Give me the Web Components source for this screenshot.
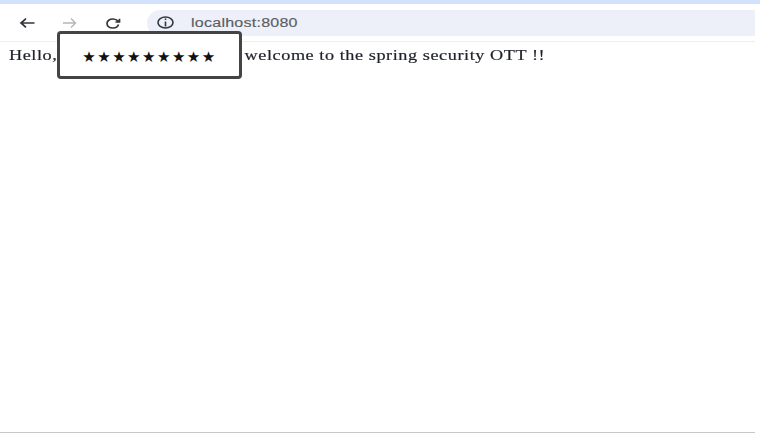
<!DOCTYPE html>
<html><head><meta charset="utf-8"><style>
html,body{margin:0;padding:0;background:#fff;width:760px;height:439px;overflow:hidden}
</style></head><body>
<browser-window>
<browser-toolbar url="localhost:8080"></browser-toolbar>
<page-content></page-content>
</browser-window>
<script>
class BrowserWindow extends HTMLElement{constructor(){super();this.attachShadow({mode:'open'}).innerHTML=`<style>
:host{display:flex;flex-direction:column;width:755px;height:432px;border-bottom:1px solid #c8c8c8;position:relative;box-sizing:content-box;filter:blur(.55px)}
.strip{height:4px;background:#d3e3fd;flex:none;margin-right:-5px}
</style><div class="strip"></div><slot></slot>`}}
class BrowserToolbar extends HTMLElement{constructor(){super();this.attachShadow({mode:'open'}).innerHTML=`<style>
:host{display:flex;align-items:center;height:38px;flex:none;border-bottom:1px solid #eceef2;box-sizing:border-box;padding:0 0 0 19px;background:#fff}
svg{display:block;flex:none}
.nav{display:flex;gap:28px;align-items:center;margin-right:26px;padding-top:1px}
.pill{flex:1;height:26px;background:#edf0f8;border-radius:13px 0 0 13px;display:flex;align-items:center;padding-left:10px;gap:17px}
.url{display:inline-block;font:12.500px "Liberation Sans",sans-serif;color:#5a5d65;letter-spacing:.2px;transform:scaleX(1.28);transform-origin:left center;-webkit-text-stroke:.15px #5a5d65}
</style>
<div class="nav">
<svg width="16" height="10" viewBox="0 0 16 10" fill="none" stroke="#33363a" stroke-width="1.700"><path d="M15.500 5H2M7 .6 2 5l5 4.400"/></svg>
<svg width="14" height="10" viewBox="0 0 14 10" fill="none" stroke="#b4b7bc" stroke-width="1.400"><path d="M0 5h12.500M8 .6 12.500 5 8 9.400"/></svg>
<svg width="16" height="11" viewBox="0 0 16 11" fill="none" stroke="#33363a" stroke-width="1.700"><path d="M13.500 6.500C12.800 8.900 10.800 10 8 10 4.500 10 2 8.200 2 5.500S4.500 1 8 1c2.400 0 4 .8 5.500 2.400M14.500 .8v3.200h-4"/></svg>
</div>
<div class="pill">
<svg width="17" height="13" viewBox="0 0 17 13" fill="none" stroke="#33363a" stroke-width="1.600"><ellipse cx="8.500" cy="6.500" rx="7.500" ry="5.500"/><path d="M8.500 5.500v5M8.500 2.500v1.600"/></svg>
<span class="url">${this.getAttribute('url')}</span>
</div>`}}
class PageContent extends HTMLElement{constructor(){super();this.attachShadow({mode:'open'}).innerHTML=`<style>
:host{display:block;flex:1;position:relative;padding:4px 0 0 9px;color:#1f222b;white-space:nowrap}
.line{display:inline-block;font:14.500px "Liberation Serif",serif;letter-spacing:.45px;transform:scaleX(1.255);transform-origin:left center;-webkit-text-stroke:.2px #1f222b}
.gap{display:inline-block;width:149.200px}
.mask{position:absolute;left:57px;top:-11px;width:185px;height:48px;box-sizing:border-box;border:3px solid #444;border-radius:4px;background:#fff;display:flex;align-items:center;justify-content:center;font:15px "DejaVu Sans",sans-serif;color:#111;letter-spacing:1.500px;padding-top:4px}
</style><span class="line">Hello,<span class="gap"></span>welcome to the spring security OTT !!</span><div class="mask">★★★★★★★★★</div>`}}
customElements.define('browser-window',BrowserWindow);
customElements.define('browser-toolbar',BrowserToolbar);
customElements.define('page-content',PageContent);
</script>
</body></html>
